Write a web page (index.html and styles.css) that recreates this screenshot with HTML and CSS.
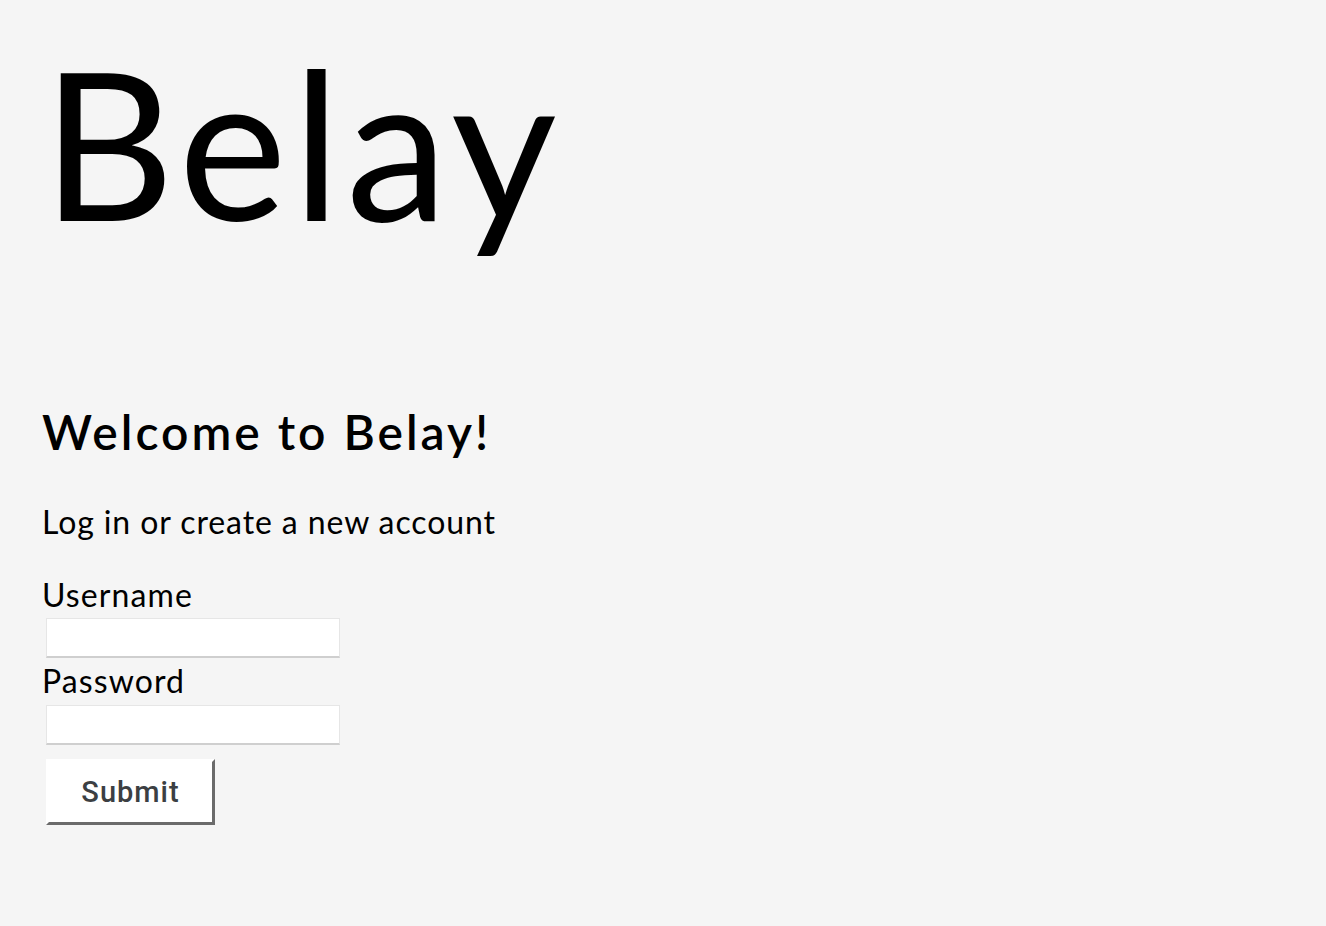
FILE: index.html
```html
<!DOCTYPE html>
<html lang="en">
<head>
<meta charset="utf-8">
<title>Belay</title>
<link rel="stylesheet" href="styles.css">
</head>
<body>
<div class="page">
  <header class="masthead">
    <h1 class="logo">Belay</h1>
  </header>
  <main class="login">
    <h2 class="welcome">Welcome to Belay!</h2>
    <p class="intro">Log in or create a new account</p>
    <form class="login-form">
      <label class="field-label" for="username">Username</label>
      <input class="field-input" id="username" type="text">
      <label class="field-label" for="password">Password</label>
      <input class="field-input" id="password" type="password">
      <button class="submit" type="button">Submit</button>
    </form>
  </main>
</div>
</body>
</html>
```
FILE: styles.css
```css
html, body {
  margin: 0;
  padding: 0;
  background: #f5f5f5;
}

body {
  font-family: Lato, "Noto Sans", "Liberation Sans", sans-serif;
  color: #000;
  width: 1326px;
  height: 926px;
  overflow: hidden;
}

.page {
  padding: 0 42px;
}

.masthead {
  padding-top: 40px;
  height: 363px;
  box-sizing: border-box;
}

.logo {
  margin: 0;
  font-size: 205px;
  font-weight: 400;
  line-height: 1;
  letter-spacing: 5.5px;
}

.login {
  display: flex;
  flex-direction: column;
  align-items: flex-start;
}

.welcome {
  margin: 0;
  font-size: 48px;
  font-weight: 600;
  line-height: 1.2;
  padding-top: 40px;
  letter-spacing: 3px;
}

.intro {
  margin: 42px 0 0;
  font-size: 32px;
  line-height: 1.2;
  letter-spacing: 0.9px;
}

.login-form {
  margin-top: 35px;
  display: flex;
  flex-direction: column;
  align-items: flex-start;
}

.field-label {
  font-size: 32px;
  line-height: 1.2;
  letter-spacing: 1.1px;
}

.field-input {
  margin: 4px;
  width: 294px;
  height: 40px;
  box-sizing: border-box;
  background: #fff;
  border: 1px solid #e6e6e6;
  border-bottom: 2px solid #cfcfcf;
  padding: 0 6px;
  font: inherit;
  font-size: 18px;
}

.submit {
  margin: 10px 4px 0;
  width: 169px;
  height: 66px;
  box-sizing: border-box;
  background: #fff;
  border-style: solid;
  border-width: 3px;
  border-color: #fff #6b6b6b #6b6b6b #fff;
  font-family: Roboto, Inter, "Noto Sans", sans-serif;
  font-weight: 500;
  font-size: 29px;
  letter-spacing: 1px;
  color: #3c3f43;
  padding: 0;
}
```
